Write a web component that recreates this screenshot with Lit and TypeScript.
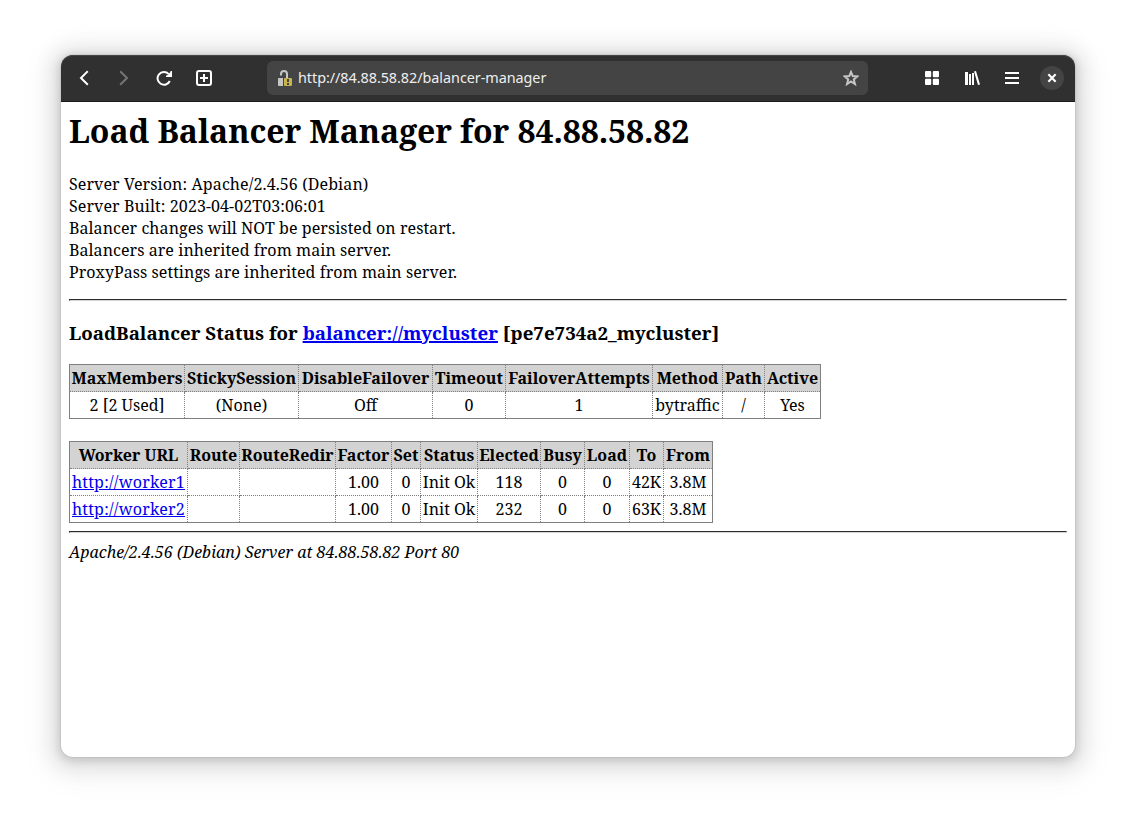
import { LitElement, html, css, svg } from "lit";
import { customElement, property } from "lit/decorators.js";

const icons = {
  back: svg`<path d="M11.1 1.9 5 8l6.1 6.1" fill="none" stroke="currentColor" stroke-width="2" stroke-linecap="square" stroke-linejoin="miter"/>`,
  forward: svg`<path d="M4.9 1.9 11 8l-6.1 6.1" fill="none" stroke="currentColor" stroke-width="2" stroke-linecap="square" stroke-linejoin="miter"/>`,
  reload: svg`<path d="M13.8 11A6.4 6.4 0 1 1 12.6 3.9" fill="none" stroke="currentColor" stroke-width="2"/><path d="M16 1v6h-6V5.6h1L14.5 2V1z" fill="currentColor"/>`,
  newTab: svg`<rect x="1" y="1" width="14" height="14" rx="2" fill="none" stroke="currentColor" stroke-width="2"/><path d="M7 4h2v3h3v2H9v3H7V9H4V7h3z" fill="currentColor"/>`,
  grid: svg`<g fill="currentColor"><rect x="1" y="1" width="6.2" height="6.2" rx="1"/><rect x="8.8" y="1" width="6.2" height="6.2" rx="1"/><rect x="1" y="8.8" width="6.2" height="6.2" rx="1"/><rect x="8.8" y="8.8" width="6.2" height="6.2" rx="1"/></g>`,
  library: svg`<g fill="currentColor"><path d="M1 2h3v13H1zM5 4h2v11H5zM8 3h2v12H8zM10 1.4l2-.5L16 14.6l-2 .5z"/></g>`,
  menu: svg`<path d="M1 2h14v2H1zM1 7h14v2H1zM1 12h14v2H1z" fill="currentColor"/>`,
  close: svg`<path d="M5.1 5.1l5.8 5.8M10.9 5.1l-5.8 5.8" fill="none" stroke="currentColor" stroke-width="2.1" stroke-linecap="square"/>`,
  star: svg`<path d="M8 1.9l1.7 4.2 4.7.3-3.6 3 1.2 4.7L8 11.5l-4 2.6 1.2-4.7-3.6-3 4.7-.3z" fill="none" stroke="currentColor" stroke-width="2"/>`,
  lock: svg`<path d="M4 5.5V4a3 3 0 0 1 6 0v4" fill="none" stroke="#c5c5c5" stroke-width="2"/><path d="M1.8 8H6v8H1.8a.8.8 0 0 1-.8-.8V8.8A.8.8 0 0 1 1.8 8z" fill="#c5c5c5"/><rect x="7" y="8" width="8" height="8" rx="1" fill="#c8b44e"/><path d="M10 9h2v3h-2zM10 13h2v2h-2z" fill="#444"/>`,
};

@customElement("ui-icon")
class UiIcon extends LitElement {
  @property() name: keyof typeof icons = "menu";
  static styles = css`
    :host { display: block; width: 16px; height: 16px; }
    svg { display: block; }
  `;
  render() {
    return html`<svg width="16" height="16" viewBox="0 0 16 16">${icons[this.name]}</svg>`;
  }
}

@customElement("status-table")
class StatusTable extends LitElement {
  @property({ attribute: false }) columns: [string, number][] = [];
  @property({ attribute: false }) rows: string[][] = [];
  static styles = css`
    :host { display: block; }
    table { border-collapse: collapse; table-layout: fixed; border: 1px solid #808080; line-height: 22px; }
    tr { height: 27px; }
    th, td { box-sizing: border-box; height: 27px; padding: 2px 0; border: 1px dotted #808080; text-align: center; white-space: nowrap; }
    th { background: #d3d3d3; font-weight: bold; }
    a { color: #0000ee; text-decoration: underline; letter-spacing: 0.24px; }
  `;
  render() {
    const width = this.columns.reduce((sum, c) => sum + c[1], 1);
    return html`<table style="width:${width}px">
      <colgroup>${this.columns.map((c) => html`<col style="width:${c[1]}px">`)}</colgroup>
      <thead><tr>${this.columns.map((c) => html`<th>${c[0]}</th>`)}</tr></thead>
      <tbody>${this.rows.map((r) => html`<tr>${r.map((v) => html`<td>${v.startsWith("http") ? html`<a href="#">${v}</a>` : v}</td>`)}</tr>`)}</tbody>
    </table>`;
  }
}

@customElement("app-root")
class AppRoot extends LitElement {
  static styles = css`
    :host { display: block; box-sizing: border-box; height: 824px; padding: 55px 61px 67px; background: #fff; overflow: hidden; }
    .window { height: 702px; border-radius: 12px; background: #fff;
      box-shadow: 0 2px 8px 2px rgba(0,0,0,.13), 0 3px 20px 10px rgba(0,0,0,.09), 0 6px 32px 16px rgba(0,0,0,.04), 0 0 0 1px rgba(0,0,0,.05); }
    .bar { box-sizing: border-box; height: 47px; display: flex; align-items: center; padding: 0 11px 0 15px; color: #fff;
      background: #303030; border-bottom: 1px solid #1b1b1b; border-radius: 12px 12px 0 0; box-shadow: inset 0 1px #464646; }
    .nav { display: flex; gap: 24px; width: 191px; }
    .dim { color: #757575; }
    .url { box-sizing: border-box; width: 601px; height: 34px; display: flex; align-items: center; padding: 0 9px 0 10px; border-radius: 6px; background: #444; }
    .address { flex: 1; margin-left: 5px; font: 14.4px/20px "Noto Sans", sans-serif; letter-spacing: -0.05px; color: #eee; white-space: nowrap; }
    .star { color: #c5c5c5; }
    .actions { display: flex; align-items: center; gap: 24px; margin-left: auto; }
    .close { width: 24px; height: 24px; margin-left: -4px; border-radius: 50%; background: #444; display: grid; place-items: center; }
    .page { padding: 7px 8px; font: 16px/22px "Noto Serif", "Droid Serif", serif; color: #000; }
    h1 { margin: 0 0 20px; font-size: 32px; line-height: 44px; white-space: nowrap; letter-spacing: -0.09px; }
    h3 { margin: 19px 0 18px; font-size: 18.72px; line-height: 26px; white-space: nowrap; }
    p { margin: 0; letter-spacing: 0.06px; }
    .server { letter-spacing: 0.1px; }
    hr { margin: 16px 0 0; height: 0; border: 1px solid; border-color: #2c2c2c #d4d4d4 #d4d4d4 #2c2c2c; }
    a { color: #0000ee; text-decoration: underline; text-decoration-thickness: 2px; }
    .workers { margin-top: 22px; }
    .end { margin-top: 8px; }
    address { margin-top: 8px; font-style: italic; letter-spacing: 0.03px; }
  `;

  render() {
    return html`
      <div class="window">
        <header class="bar">
          <nav class="nav">
            <ui-icon name="back"></ui-icon>
            <ui-icon name="forward" class="dim"></ui-icon>
            <ui-icon name="reload"></ui-icon>
            <ui-icon name="newTab"></ui-icon>
          </nav>
          <div class="url">
            <ui-icon name="lock"></ui-icon>
            <span class="address">http://84.88.58.82/balancer-manager</span>
            <ui-icon name="star" class="star"></ui-icon>
          </div>
          <div class="actions">
            <ui-icon name="grid"></ui-icon>
            <ui-icon name="library"></ui-icon>
            <ui-icon name="menu"></ui-icon>
            <span class="close"><ui-icon name="close"></ui-icon></span>
          </div>
        </header>
        <main class="page">
          <h1>Load Balancer Manager for 84.88.58.82</h1>
          <p class="server">Server Version: Apache/2.4.56 (Debian)</p>
          <p class="server">Server Built: 2023-04-02T03:06:01</p>
          <p>Balancer changes will NOT be persisted on restart.</p>
          <p>Balancers are inherited from main server.</p>
          <p>ProxyPass settings are inherited from main server.</p>
          <hr>
          <h3>LoadBalancer Status for <a href="#">balancer://mycluster</a> [pe7e734a2_mycluster]</h3>
          <status-table
            .columns=${[["MaxMembers", 115], ["StickySession", 114], ["DisableFailover", 134], ["Timeout", 73], ["FailoverAttempts", 147], ["Method", 70], ["Path", 42], ["Active", 56]]}
            .rows=${[["2 [2 Used]", "(None)", "Off", "0", "1", "bytraffic", "/", "Yes"]]}></status-table>
          <status-table class="workers"
            .columns=${[["Worker URL", 118], ["Route", 52], ["RouteRedir", 96], ["Factor", 56], ["Set", 29], ["Status", 57], ["Elected", 63], ["Busy", 44], ["Load", 45], ["To", 34], ["From", 49]]}
            .rows=${[
              ["http://worker1", "", "", "1.00", "0", "Init Ok", "118", "0", "0", "42K", "3.8M"],
              ["http://worker2", "", "", "1.00", "0", "Init Ok", "232", "0", "0", "63K", "3.8M"],
            ]}></status-table>
          <hr class="end">
          <address>Apache/2.4.56 (Debian) Server at 84.88.58.82 Port 80</address>
        </main>
      </div>
    `;
  }
}
